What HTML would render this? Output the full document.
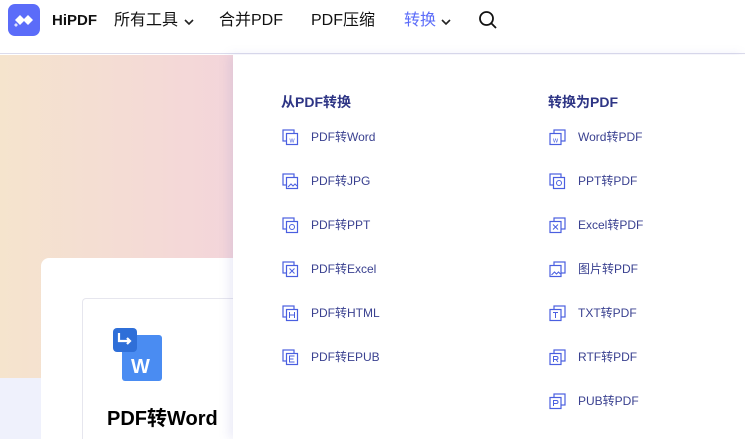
<!DOCTYPE html>
<html style="width:745px;height:439px;overflow:hidden"><head><meta charset="utf-8"><style>
*{margin:0;padding:0;box-sizing:border-box}
body{width:745px;height:439px;overflow:hidden;position:relative;font-family:"Liberation Sans","Noto Sans CJK SC",sans-serif;background:#fff}
.nav{position:absolute;left:0;top:0;width:745px;height:54px;background:#fff;border-bottom:1px solid #dcdcec}
.logo{position:absolute;left:8px;top:4px;width:32px;height:32px;border-radius:7px;background:#5b6cf9}
.nav span{position:absolute;top:10px;font-size:16px;color:#111;line-height:22px}
.hero{position:absolute;left:0;top:55px;width:745px;height:323px;background:linear-gradient(90deg,#f5e4cd 0px,#f3d3dc 260px,#f3d3dc)}
.low{position:absolute;left:0;top:378px;width:745px;height:61px;background:#eff1fc}
.card{position:absolute;left:41px;top:258px;width:220px;height:181px;background:#fff;border-radius:8px 8px 0 0}
.inner{position:absolute;left:82px;top:298px;width:170px;height:141px;border:1px solid #e6e6ee;border-bottom:none;border-radius:4px 4px 0 0;background:#fff}
.panel{position:absolute;left:233px;top:55px;width:512px;height:384px;background:#fff;box-shadow:-4px 0 10px rgba(120,120,200,.15)}
.h{position:absolute;font-size:14px;font-weight:bold;color:#2e3585;line-height:20px}
.it{position:absolute;font-size:12px;color:#3a4190;line-height:16px}
.ic{position:absolute;width:17px;height:17px}
</style></head><body>
<div class="nav">
 <div class="logo"><svg width="32" height="32" viewBox="0 0 32 32"><g fill="#fff"><path d="M12 11l5 5-5 5-5-5z"/><path d="M20 11l5 5-5 5-5-5z"/><path d="M8 19l2 2-2 2-2-2z" opacity=".8"/></g></svg></div>
 <span style="left:52px;font-weight:bold;font-size:15px">HiPDF</span>
 <span style="left:114px">所有工具</span>
 <svg style="position:absolute;left:184px;top:19px" width="10" height="7" viewBox="0 0 10 7"><path d="M1 1l4 4 4-4" stroke="#222" stroke-width="1.6" fill="none"/></svg>
 <span style="left:219px">合并PDF</span>
 <span style="left:311px">PDF压缩</span>
 <span style="left:404px;color:#5b6cf9">转换</span>
 <svg style="position:absolute;left:441px;top:19px" width="10" height="7" viewBox="0 0 10 7"><path d="M1 1l4 4 4-4" stroke="#222" stroke-width="1.6" fill="none"/></svg>
 <svg style="position:absolute;left:478px;top:10px" width="20" height="20" viewBox="0 0 20 20"><circle cx="8.5" cy="8.5" r="6.5" fill="none" stroke="#111" stroke-width="1.8"/><path d="M13 13l5 5" stroke="#111" stroke-width="1.8"/></svg>
</div>
<div class="hero"></div><div class="low"></div>
<div class="card"></div>
<div class="inner"></div>
<svg style="position:absolute;left:113px;top:328px" width="50" height="54" viewBox="0 0 50 54"><rect x="9" y="7" width="40" height="46" rx="3" fill="#4a8cf2"/><rect x="0" y="0" width="24" height="24" rx="4" fill="#2f6fd8"/><path d="M6 5v8h11M14 10l3 3-3 3" stroke="#fff" stroke-width="2.2" fill="none"/><text x="18" y="45" font-family="Liberation Sans" font-weight="bold" font-size="20" fill="#fff">W</text></svg>
<div style="position:absolute;left:107px;top:402px;font-size:20px;font-weight:bold;color:#000">PDF转Word</div>
<div class="panel"></div>
<div class="h" style="left:281px;top:92px">从PDF转换</div>
<div class="h" style="left:548px;top:92px">转换为PDF</div>
<svg class="ic" style="left:282px;top:129px" viewBox="0 0 17 17"><rect x="1" y="1" width="11" height="11" fill="none" stroke="#4a5fe0" stroke-width="1.2"/><rect x="4.5" y="4.5" width="11" height="11" fill="#fff" stroke="#4a5fe0" stroke-width="1.2"/><text x="10" y="13.5" font-size="7" text-anchor="middle" fill="#4a5fe0" font-family="Liberation Sans">w</text></svg>
<div class="it" style="left:311px;top:129px">PDF转Word</div>
<svg class="ic" style="left:282px;top:173px" viewBox="0 0 17 17"><rect x="1" y="1" width="11" height="11" fill="none" stroke="#4a5fe0" stroke-width="1.2"/><rect x="4.5" y="4.5" width="11" height="11" fill="#fff" stroke="#4a5fe0" stroke-width="1.2"/><path d="M6 14l3-3 2 2 2-2 2 2" stroke="#4a5fe0" fill="none"/></svg>
<div class="it" style="left:311px;top:173px">PDF转JPG</div>
<svg class="ic" style="left:282px;top:217px" viewBox="0 0 17 17"><rect x="1" y="1" width="11" height="11" fill="none" stroke="#4a5fe0" stroke-width="1.2"/><rect x="4.5" y="4.5" width="11" height="11" fill="#fff" stroke="#4a5fe0" stroke-width="1.2"/><circle cx="10" cy="10" r="2.5" fill="none" stroke="#4a5fe0"/></svg>
<div class="it" style="left:311px;top:217px">PDF转PPT</div>
<svg class="ic" style="left:282px;top:261px" viewBox="0 0 17 17"><rect x="1" y="1" width="11" height="11" fill="none" stroke="#4a5fe0" stroke-width="1.2"/><rect x="4.5" y="4.5" width="11" height="11" fill="#fff" stroke="#4a5fe0" stroke-width="1.2"/><path d="M7.5 7.5l5 5M12.5 7.5l-5 5" stroke="#4a5fe0"/></svg>
<div class="it" style="left:311px;top:261px">PDF转Excel</div>
<svg class="ic" style="left:282px;top:305px" viewBox="0 0 17 17"><rect x="1" y="1" width="11" height="11" fill="none" stroke="#4a5fe0" stroke-width="1.2"/><rect x="4.5" y="4.5" width="11" height="11" fill="#fff" stroke="#4a5fe0" stroke-width="1.2"/><path d="M7.5 7v6M12.5 7v6M7.5 10h5" stroke="#4a5fe0"/></svg>
<div class="it" style="left:311px;top:305px">PDF转HTML</div>
<svg class="ic" style="left:282px;top:349px" viewBox="0 0 17 17"><rect x="1" y="1" width="11" height="11" fill="none" stroke="#4a5fe0" stroke-width="1.2"/><rect x="4.5" y="4.5" width="11" height="11" fill="#fff" stroke="#4a5fe0" stroke-width="1.2"/><path d="M12.5 7h-5v6h5M7.5 10h4" stroke="#4a5fe0" fill="none"/></svg>
<div class="it" style="left:311px;top:349px">PDF转EPUB</div>

<svg class="ic" style="left:549px;top:129px" viewBox="0 0 17 17"><rect x="5" y="1" width="11" height="11" fill="none" stroke="#4a5fe0" stroke-width="1.2"/><rect x="1" y="4.5" width="11" height="11" fill="#fff" stroke="#4a5fe0" stroke-width="1.2"/><text x="6.5" y="13.5" font-size="7" text-anchor="middle" fill="#4a5fe0" font-family="Liberation Sans">w</text></svg>
<div class="it" style="left:578px;top:129px">Word转PDF</div>
<svg class="ic" style="left:549px;top:173px" viewBox="0 0 17 17"><rect x="1" y="1" width="11" height="11" fill="none" stroke="#4a5fe0" stroke-width="1.2"/><rect x="4.5" y="4.5" width="11" height="11" fill="#fff" stroke="#4a5fe0" stroke-width="1.2"/><circle cx="10" cy="10" r="2.5" fill="none" stroke="#4a5fe0"/></svg>
<div class="it" style="left:578px;top:173px">PPT转PDF</div>
<svg class="ic" style="left:549px;top:217px" viewBox="0 0 17 17"><rect x="5" y="1" width="11" height="11" fill="none" stroke="#4a5fe0" stroke-width="1.2"/><rect x="1" y="4.5" width="11" height="11" fill="#fff" stroke="#4a5fe0" stroke-width="1.2"/><path d="M4 7.5l5 5M9 7.5l-5 5" stroke="#4a5fe0"/></svg>
<div class="it" style="left:578px;top:217px">Excel转PDF</div>
<svg class="ic" style="left:549px;top:261px" viewBox="0 0 17 17"><rect x="5" y="1" width="11" height="11" fill="none" stroke="#4a5fe0" stroke-width="1.2"/><rect x="1" y="4.5" width="11" height="11" fill="#fff" stroke="#4a5fe0" stroke-width="1.2"/><path d="M2.5 14l3-3 2 2 2-2 2 2" stroke="#4a5fe0" fill="none"/></svg>
<div class="it" style="left:578px;top:261px">图片转PDF</div>
<svg class="ic" style="left:549px;top:305px" viewBox="0 0 17 17"><rect x="5" y="1" width="11" height="11" fill="none" stroke="#4a5fe0" stroke-width="1.2"/><rect x="1" y="4.5" width="11" height="11" fill="#fff" stroke="#4a5fe0" stroke-width="1.2"/><path d="M4 7.5h5M6.5 7.5v5.5" stroke="#4a5fe0"/></svg>
<div class="it" style="left:578px;top:305px">TXT转PDF</div>
<svg class="ic" style="left:549px;top:349px" viewBox="0 0 17 17"><rect x="5" y="1" width="11" height="11" fill="none" stroke="#4a5fe0" stroke-width="1.2"/><rect x="1" y="4.5" width="11" height="11" fill="#fff" stroke="#4a5fe0" stroke-width="1.2"/><path d="M4.5 13V7.5h3a1.5 1.5 0 010 3h-3M7 10.5l2 2.5" stroke="#4a5fe0" fill="none"/></svg>
<div class="it" style="left:578px;top:349px">RTF转PDF</div>
<svg class="ic" style="left:549px;top:393px" viewBox="0 0 17 17"><rect x="5" y="1" width="11" height="11" fill="none" stroke="#4a5fe0" stroke-width="1.2"/><rect x="1" y="4.5" width="11" height="11" fill="#fff" stroke="#4a5fe0" stroke-width="1.2"/><path d="M4.5 13V7.5h3a1.5 1.5 0 010 3h-3" stroke="#4a5fe0" fill="none"/></svg>
<div class="it" style="left:578px;top:393px">PUB转PDF</div>
</body></html>
